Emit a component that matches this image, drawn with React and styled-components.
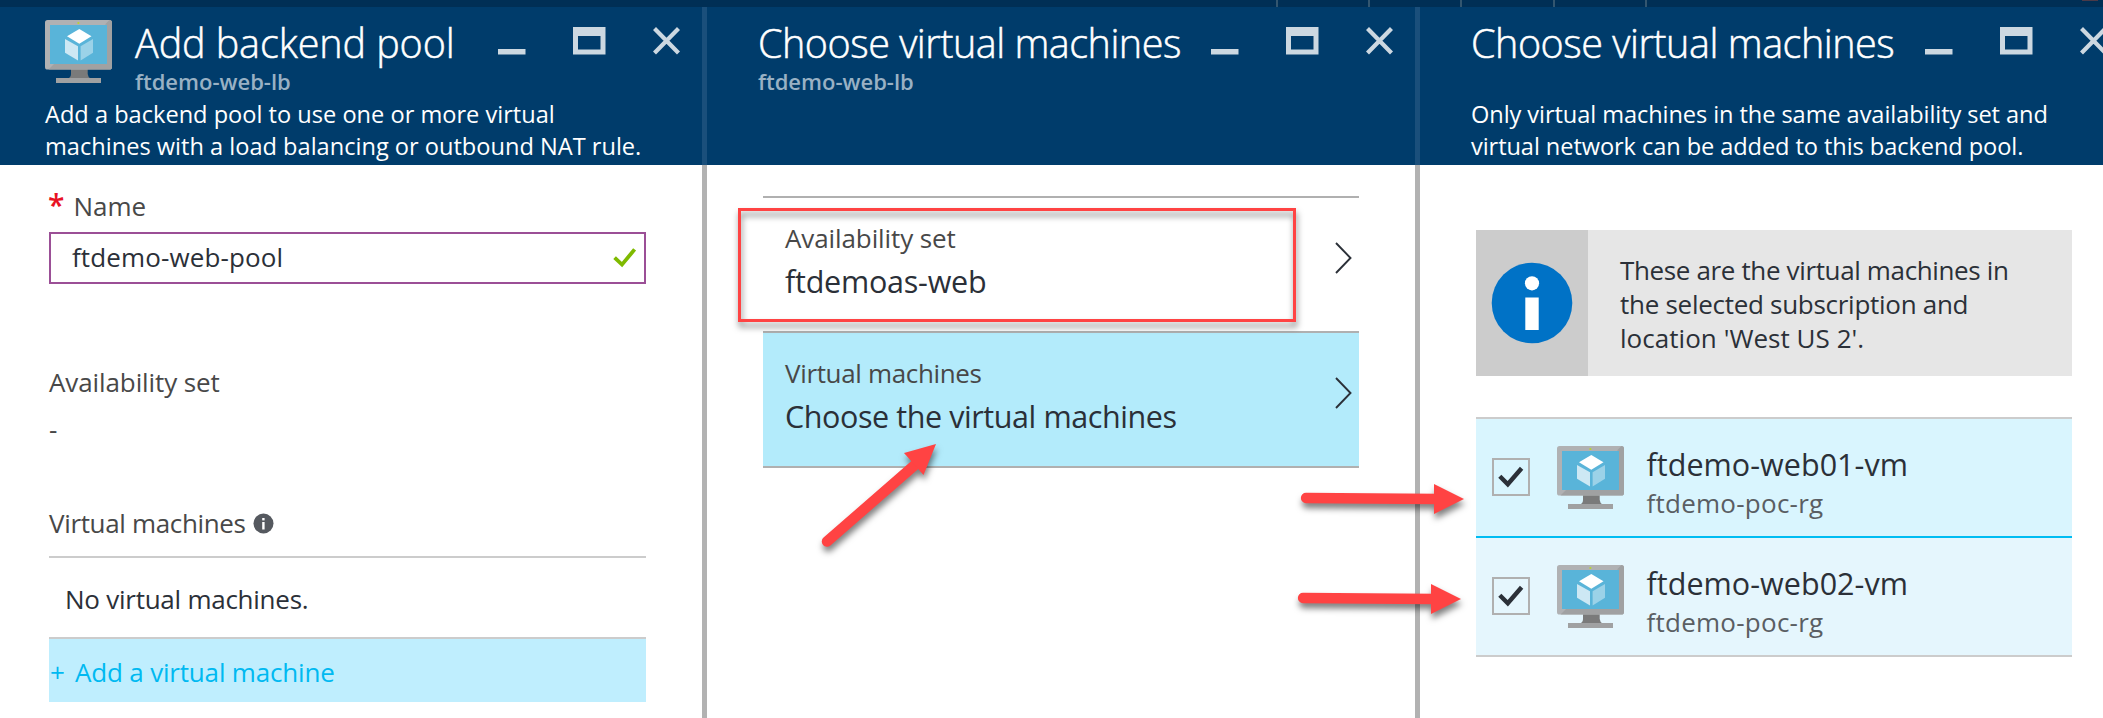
import React from "react";
import styled, { createGlobalStyle } from "styled-components";

const GlobalStyle = createGlobalStyle`
  * { box-sizing: border-box; }
  body { margin: 0; background: #fff; }
`;

const Shell = styled.div`
  position: relative;
  width: 2103px;
  height: 718px;
  overflow: hidden;
  display: flex;
  flex-direction: column;
  background: #fff;
  font-family: "Open Sans", "Noto Sans", sans-serif;
  color: #2b3038;
  white-space: nowrap;
`;

const TopBar = styled.div`
  flex: none;
  height: 7px;
  display: flex;
  padding-left: 1276px;
  background: #002f55;
`;

const TopTick = styled.div`
  width: ${(p) => p.$span}px;
  border-left: 2px solid #33566f;
`;

const AvatarEdge = styled.div`
  width: 16px;
  height: 1px;
  margin-left: 435px;
  background: #4b3a48;
`;

const Blades = styled.main`
  flex: 1;
  display: flex;
`;

const Blade = styled.section`
  flex: none;
  width: ${(p) => p.$width}px;
  display: flex;
  flex-direction: column;
`;

const Divider = styled.div`
  flex: none;
  width: 5px;
  background: linear-gradient(#1a4f7b 158px, #b2b2b2 158px);
`;

const BladeHeader = styled.header`
  flex: none;
  height: 158px;
  padding: 12px ${(p) => p.$right || 22.5}px 0 ${(p) => p.$left}px;
  background: #003c6b;
  color: #fff;
`;

const HeaderTop = styled.div`
  display: flex;
  align-items: flex-start;
  height: 76px;
`;

const HeaderIcon = styled.div`
  margin: 1px 23px 0 0;
  line-height: 0;
`;

const Title = styled.h1`
  margin: 0;
  font-size: 39.5px;
  font-weight: 300;
  line-height: 48px;
  letter-spacing: ${(p) => p.$track || 0}px;
  -webkit-text-stroke: 0.5px #fff;
`;

const Subtitle = styled.div`
  font-size: 22px;
  font-weight: 600;
  line-height: 28px;
  color: #99b1c4;
`;

const Controls = styled.div`
  display: flex;
  gap: 47px;
  margin: 8px 0 0 auto;
  svg { display: block; }
`;

const Description = styled.p`
  margin: 3px 0 0;
  font-size: 23.6px;
  line-height: 32.3px;
  letter-spacing: ${(p) => p.$track || 0}px;
`;

const Body = styled.div`
  padding: ${(p) => p.$top}px 0 0 ${(p) => p.$left}px;
  display: flex;
  flex-direction: column;
`;

const Label = styled.div`
  display: flex;
  align-items: baseline;
  margin-top: ${(p) => p.$gap || 0}px;
  font-size: 26px;
  line-height: 36px;
  letter-spacing: ${(p) => p.$track || 0}px;
  color: #484848;
`;

const Required = styled.span`
  width: 24.5px;
  margin-left: -1px;
  margin-right: 1px;
  font-size: 30px;
  font-weight: 600;
  line-height: 30px;
  color: #e81123;
`;

const InfoDot = styled.span`
  align-self: center;
  margin-left: 7px;
  line-height: 0;
`;

const Input = styled.div`
  display: flex;
  align-items: center;
  justify-content: space-between;
  width: 597px;
  height: 52px;
  margin-top: 8px;
  padding: 0 7px 0 21px;
  border: 2px solid #9b4f96;
  font-size: 26px;
  letter-spacing: 0.12px;
`;

const InputText = styled.span`
  padding-bottom: 2px;
`;

const EmptyRow = styled.div`
  width: 597px;
  height: 83px;
  margin-top: 15px;
  padding: 2px 0 0 16px;
  border-top: 2px solid #ccc;
  border-bottom: 2px solid #ccc;
  font-size: 26px;
  line-height: 78px;
  letter-spacing: -0.25px;
`;

const AddRow = styled.div`
  display: flex;
  width: 597px;
  height: 63px;
  padding: 2px 0 0 1px;
  background: #bfeefe;
  color: #00b9f1;
  font-size: 26px;
  line-height: 62px;
  letter-spacing: -0.18px;
`;

const Plus = styled.span`
  width: 25px;
`;

const Picker = styled.div`
  width: 596px;
  height: 135px;
  display: flex;
  justify-content: space-between;
  padding: 22px 7px 0 22px;
  border-top: 2px solid #b0b0b0;
  background: ${(p) => (p.$active ? "#b3ebfb" : "#fff")};
  &:last-child { height: 137px; border-bottom: 2px solid #b0b0b0; }
`;

const PickerValue = styled.div`
  margin-top: 4px;
  font-size: 30.5px;
  line-height: 42px;
  letter-spacing: ${(p) => p.$track || 0}px;
`;

const ChevronBox = styled.div`
  margin-top: 22px;
  line-height: 0;
`;

const InfoBox = styled.div`
  display: flex;
  width: 596px;
  height: 146px;
  background: #e6e6e6;
`;

const InfoIcon = styled.div`
  width: 112px;
  display: flex;
  align-items: center;
  justify-content: center;
  background: #ccc;
`;

const InfoText = styled.div`
  padding: 23px 0 0 32px;
  font-size: 26px;
  line-height: 34px;
`;

const InfoLine = styled.div`
  letter-spacing: ${(p) => p.$track}px;
`;

const VmList = styled.div`
  width: 596px;
  margin-top: 41px;
  border-top: 2px solid #ccc;
  border-bottom: 2px solid #ccc;
`;

const VmRow = styled.div`
  display: flex;
  align-items: center;
  height: ${(p) => (p.$hover ? 119 : 117)}px;
  padding-left: 16px;
  background: ${(p) => (p.$hover ? "#d9f5fe" : "#e5f6fd")};
  border-bottom: ${(p) => (p.$hover ? "2px solid #00bcf2" : "none")};
`;

const Checkbox = styled.div`
  width: 38px;
  height: 38px;
  display: flex;
  align-items: center;
  justify-content: center;
  border: 2px solid #b0b0b0;
  margin: 0 27px 1px 0;
`;

const VmText = styled.div`
  align-self: flex-start;
  margin: 24px 0 0 22.5px;
`;

const VmName = styled.div`
  font-size: 30.5px;
  line-height: 42px;
  letter-spacing: 0.04px;
`;

const VmGroup = styled.div`
  font-size: 26px;
  line-height: 36px;
  letter-spacing: 0.25px;
  color: #5a5e63;
`;

const Annotations = styled.svg`
  position: absolute;
  inset: 0;
  pointer-events: none;
  filter: drop-shadow(1px 5px 3px rgba(0, 0, 0, 0.5));
`;

function VmIcon() {
  return (
    <svg width="67" height="63" viewBox="0 0 67 63">
      <path d="M26 49H42.7V54Q43 57 45.5 58.5H23Q26 57 26 54Z" fill="#7a7a7a" />
      <rect x="11" y="58" width="45" height="5" fill="#a0a1a2" />
      <rect x="0" y="0" width="67" height="49.6" rx="2.6" fill="#b0b1b3" />
      <path d="M64.4 0Q67 0 67 2.6V47Q67 49.6 64.4 49.6H3.5L9 44H62V5L60 4.5Z" fill="#a0a1a2" />
      <rect x="5" y="5" width="57" height="39" fill="#59b4d9" />
      <circle cx="33.4" cy="3" r="1.1" fill="#b8d432" />
      <path d="M34.3 9L46.5 16.3L34.3 23.7L22 16.3Z" fill="#fff" />
      <path d="M20 19L33 26.2V40.4L20 32.8Z" fill="#cde8f4" />
      <path d="M48 19L35.6 26.2V40.4L48 32.8Z" fill="#9bd2e8" />
    </svg>
  );
}

function WindowControls() {
  return (
    <Controls>
      <svg width="28" height="28">
        <rect x="0" y="22" width="27.5" height="5.5" fill="#ccd8e1" />
      </svg>
      <svg width="33" height="28">
        <path fillRule="evenodd" d="M0 0H32.5V27.5H0ZM5 9V22.5H27.5V9Z" fill="#ccd8e1" />
      </svg>
      <svg width="27" height="28">
        <path d="M1.5 1.5L25.5 26M25.5 1.5L1.5 26" stroke="#ccd8e1" strokeWidth="4.2" />
      </svg>
    </Controls>
  );
}

function Chevron() {
  return (
    <ChevronBox>
      <svg width="17" height="32">
        <path d="M1 1L15.5 16L1 31" fill="none" stroke="#2b3038" strokeWidth="1.9" />
      </svg>
    </ChevronBox>
  );
}

function Vm({ name, group, hover }) {
  return (
    <VmRow $hover={hover}>
      <Checkbox>
        <svg width="26" height="22">
          <path d="M1.8 10.2L9.8 18.2L23.6 2.2" fill="none" stroke="#2b3038" strokeWidth="4.4" />
        </svg>
      </Checkbox>
      <VmIcon />
      <VmText>
        <VmName>{name}</VmName>
        <VmGroup>{group}</VmGroup>
      </VmText>
    </VmRow>
  );
}

export default function App() {
  return (
    <Shell>
      <GlobalStyle />
      <TopBar>
        <TopTick $span={92} />
        <TopTick $span={92} />
        <TopTick $span={93} />
        <TopTick $span={92} />
        <TopTick $span={2} />
        <AvatarEdge />
      </TopBar>
      <Blades>
        <Blade $width={702}>
          <BladeHeader $left={45}>
            <HeaderTop>
              <HeaderIcon><VmIcon /></HeaderIcon>
              <div>
                <Title $track={-0.08}>Add backend pool</Title>
                <Subtitle>ftdemo-web-lb</Subtitle>
              </div>
              <WindowControls />
            </HeaderTop>
            <Description>
              Add a backend pool to use one or more virtual<br />
              machines with a load balancing or outbound NAT rule.
            </Description>
          </BladeHeader>
          <Body $top={23} $left={49}>
            <Label><Required>*</Required>Name</Label>
            <Input>
              <InputText>ftdemo-web-pool</InputText>
              <svg width="24" height="20">
                <path d="M1.6 9.6L9 16.6L21.6 1.4" fill="none" stroke="#7fba00" strokeWidth="3.8" />
              </svg>
            </Input>
            <Label $gap={80} $track={-0.1}>Availability set</Label>
            <Label $gap={11}>-</Label>
            <Label $gap={58} $track={-0.34}>
              Virtual machines
              <InfoDot>
                <svg width="21" height="21">
                  <circle cx="10.5" cy="10.5" r="10" fill="#55595f" />
                  <rect x="9.2" y="5" width="2.4" height="2.4" fill="#fff" />
                  <rect x="9.2" y="9" width="2.4" height="7.5" fill="#fff" />
                </svg>
              </InfoDot>
            </Label>
            <EmptyRow>No virtual machines.</EmptyRow>
            <AddRow><Plus>+</Plus>Add a virtual machine</AddRow>
          </Body>
        </Blade>
        <Divider />
        <Blade $width={708}>
          <BladeHeader $left={51}>
            <HeaderTop>
              <div>
                <Title $track={-0.48}>Choose virtual machines</Title>
                <Subtitle>ftdemo-web-lb</Subtitle>
              </div>
              <WindowControls />
            </HeaderTop>
          </BladeHeader>
          <Body $top={31} $left={56}>
            <Picker>
              <div>
                <Label $track={-0.1}>Availability set</Label>
                <PickerValue $track={-0.24}>ftdemoas-web</PickerValue>
              </div>
              <Chevron />
            </Picker>
            <Picker $active>
              <div>
                <Label $track={-0.34}>Virtual machines</Label>
                <PickerValue $track={-0.42}>Choose the virtual machines</PickerValue>
              </div>
              <Chevron />
            </Picker>
          </Body>
        </Blade>
        <Divider />
        <Blade $width={708}>
          <BladeHeader $left={51} $right={21.5}>
            <HeaderTop>
              <Title $track={-0.46}>Choose virtual machines</Title>
              <WindowControls />
            </HeaderTop>
            <Description $track={-0.08}>
              Only virtual machines in the same availability set and<br />
              virtual network can be added to this backend pool.
            </Description>
          </BladeHeader>
          <Body $top={65} $left={56}>
            <InfoBox>
              <InfoIcon>
                <svg width="82" height="82">
                  <circle cx="41" cy="41" r="40.3" fill="#0072c6" />
                  <circle cx="41" cy="21.3" r="7.1" fill="#fff" />
                  <rect x="34.3" y="35.5" width="13.4" height="32.5" fill="#fff" />
                </svg>
              </InfoIcon>
              <InfoText>
                <InfoLine $track={-0.36}>These are the virtual machines in</InfoLine>
                <InfoLine $track={-0.28}>the selected subscription and</InfoLine>
                <InfoLine $track={0.04}>location 'West US 2'.</InfoLine>
              </InfoText>
            </InfoBox>
            <VmList>
              <Vm name="ftdemo-web01-vm" group="ftdemo-poc-rg" hover />
              <Vm name="ftdemo-web02-vm" group="ftdemo-poc-rg" />
            </VmList>
          </Body>
        </Blade>
      </Blades>
      <Annotations width="2103" height="718">
        <rect x="739.5" y="209.5" width="555" height="111" fill="none" stroke="#ff4343" strokeWidth="3" />
        <g fill="#ff4343" stroke="#ff4343">
          <path d="M827 541.5L916 464" strokeWidth="10.5" strokeLinecap="round" />
          <path d="M936 444L904 453L923.5 475Z" stroke="none" />
          <path d="M1306 498L1438 499" strokeWidth="10.3" strokeLinecap="round" />
          <path d="M1464 499L1434 484V514Z" stroke="none" />
          <path d="M1303 598L1435 599" strokeWidth="10.3" strokeLinecap="round" />
          <path d="M1461 599L1431 584V614Z" stroke="none" />
        </g>
      </Annotations>
    </Shell>
  );
}
